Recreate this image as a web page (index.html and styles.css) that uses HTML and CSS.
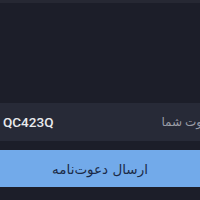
FILE: index.html
```html
<!DOCTYPE html>
<html lang="fa">
<head>
<meta charset="utf-8">
<link rel="stylesheet" href="styles.css">
</head>
<body>
<div class="page">
  <div class="topbar"></div>
  <div class="spacer"></div>
  <div class="field">
    <span class="code">QC423Q</span>
    <span class="label" dir="rtl">کد دعوت شما</span>
  </div>
  <button class="send" dir="rtl">ارسال دعوت‌نامه</button>
</div>
</body>
</html>
```
FILE: styles.css
```css
html, body {
  margin: 0;
  padding: 0;
  background: #1c1e29;
  overflow: hidden;
  width: 200px;
  height: 200px;
}
.page {
  display: flex;
  flex-direction: column;
  width: 200px;
  height: 200px;
  font-family: Roboto, "DejaVu Sans", sans-serif;
}
.topbar {
  height: 3px;
  background: #262833;
}
.spacer {
  height: 100px;
}
.field {
  height: 38px;
  background: #272a37;
  display: flex;
  align-items: center;
  justify-content: space-between;
  margin-left: -13px;
  margin-right: -30px;
  padding: 0 0 0 16px;
}
.code {
  color: #e9eaee;
  font-size: 13.5px;
  font-weight: 500;
}
.label {
  color: #9a9ca6;
  font-size: 12px;
}
.send {
  margin-top: 9px;
  height: 37px;
  border: 0;
  background: #72aaea;
  color: #1b2a47;
  font-family: "DejaVu Sans", sans-serif;
  font-size: 13.5px;
  padding: 0;
  width: 200px;
}
```
